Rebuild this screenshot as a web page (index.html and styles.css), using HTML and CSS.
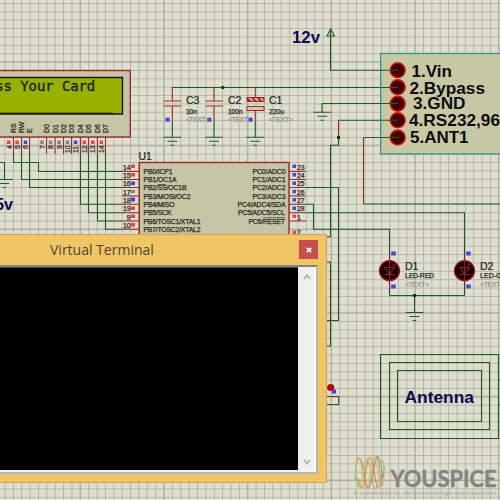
FILE: index.html
```
<!DOCTYPE html>
<html lang="en">
<head>
<meta charset="utf-8">
<title>Virtual Terminal</title>
<link rel="stylesheet" href="styles.css">
</head>
<body>
<main class="sheet">
<svg class="schematic" viewBox="0 0 500 500" width="500" height="500">
  <defs>
    <pattern id="minor" x="4.5" y="3" width="8.37" height="8.37" patternUnits="userSpaceOnUse">
      <path class="grid" d="M.5 0V8.37M0 .5H8.37"/>
    </pattern>
    <pattern id="major" x="79.2" y="60.8" width="83.7" height="83.7" patternUnits="userSpaceOnUse">
      <path class="grid-major" d="M1 0V83.7M0 1H83.7"/>
    </pattern>
    <pattern id="hatch" width="4" height="4" patternUnits="userSpaceOnUse" patternTransform="rotate(-45)">
      <rect width="2.3" height="4" fill="#a32222"/>
    </pattern>
    <g id="ground"><path class="wire" d="M-9 0H9M-5 4H5M-1.7 8H1.7"/></g>
    <g id="cap">
      <path class="pin" d="M0 87.5V101M-8.500 101H9M-8.500 106H9M0 106V121"/>
      <path class="wire" d="M0 121V137"/>
      <use href="#ground" y="137.300"/>
      <rect class="blue" x="-6.700" y="117.700" width="4" height="4"/>
    </g>
    <g id="led">
      <path class="wire" d="M0 229V253M0 290V295.500"/>
      <circle cx="0" cy="270.700" r="10" fill="#120000" stroke="#a01010" stroke-width="1.300"/>
      <path class="diode" d="M0 253V290M-5 267.500H5L0 274ZM-5 274.500H5M3 266L7 263"/>
      <rect class="blue" x="1.700" y="251.500" width="4.500" height="4"/>
      <rect class="blue" x="1.700" y="284.500" width="4.500" height="4"/>
    </g>
  </defs>

  <rect width="500" height="500" fill="url(#minor)"/>
  <rect width="500" height="500" fill="url(#major)"/>

  <!-- LCD module -->
  <rect class="part" x="-5" y="70.500" width="135.300" height="66.500"/>
  <rect x="-5" y="77.500" width="127.500" height="36.500" fill="#98b000" stroke="#111" stroke-width="1.400"/>
  <path d="M0 113.200H113" stroke="#111"/>
  <text class="lcd" x="-4.700" y="91" textLength="100" xml:space="preserve">ss Your Card</text>
  <g class="tiny" transform="rotate(-90)">
    <text x="-133" y="16">RS</text><text x="-133" y="24">RW</text><text x="-133" y="32">E</text>
    <text x="-133" y="49">D0</text><text x="-133" y="57.500">D1</text><text x="-133" y="66">D2</text><text x="-133" y="74">D3</text>
    <text x="-133" y="83">D4</text><text x="-133" y="91">D5</text><text x="-133" y="100">D6</text><text x="-133" y="108">D7</text>
    <text x="-149" y="12">4</text><text x="-149" y="20">5</text><text x="-149" y="28">6</text>
    <text x="-149" y="45">7</text><text x="-149" y="53">8</text><text x="-149" y="61.500">9</text><text x="-153" y="70">10</text>
    <text x="-153" y="78">11</text><text x="-153" y="86.500">12</text><text x="-153" y="95">13</text><text x="-153" y="103.500">14</text>
  </g>
  <path class="red" d="M7 140.500h3.500v3.500H7ZM15.300 140.500h3.500v3.500h-3.500ZM82.500 140.500h3.500v3.500h-3.500ZM91 140.500h3.500v3.500H91ZM99.500 140.500h3.500v3.500h-3.500Z"/>
  <path class="blue" d="M23.700 140.500h3.500v3.500h-3.500ZM73.800 140.500h3.500v3.500h-3.500Z"/>
  <path class="gray" d="M40.300 140.500h3.500v3.500h-3.500ZM48.800 140.500h3.500v3.500h-3.500ZM57.300 140.500h3.500v3.500h-3.500ZM65.700 140.500h3.500v3.500h-3.500Z"/>
  <path class="pin" d="M13.500 137V154M21.500 137V154M29.500 137V154M46.500 137V154M55 137V154M63.500 137V154M71.500 137V154M80.500 137V154M88.500 137V154M97.500 137V154M105.500 137V154"/>
  <path class="wire" d="M13.500 154V162.500H38.500V171.500H122M21.500 154V179.500H122M29.500 154V187.500H122M80.500 154V204.300H122M88.500 154V212.700H122M97.500 154V221H122M105.500 154V229.300H122"/>
  <path class="wire" d="M0 162.500H4.500V179.500M0 179.500H13M0 183.500H9M3 187.500H6"/>
  <text class="net" x="-5" y="210" textLength="18" lengthAdjust="spacingAndGlyphs">5v</text>

  <!-- Decoupling capacitors -->
  <path class="wire" d="M172 87.500H397"/>
  <circle cx="222.700" cy="87.500" r="1.700" fill="#0b3a12"/>
  <use href="#cap" x="172.300"/>
  <use href="#cap" x="214"/>
  <path class="pin" d="M255.300 87.500V97M255.300 111V121"/>
  <path class="wire" d="M255.300 121V137"/>
  <use href="#ground" x="255.300" y="137.300"/>
  <rect x="247" y="97.500" width="17" height="4" fill="#ead8bd"/>
  <rect x="247" y="97.500" width="17" height="4" fill="url(#hatch)" stroke="#9c2626"/>
  <rect x="247" y="106.500" width="17" height="4" fill="#dcc7a8" stroke="#9c2626"/>
  <rect class="blue" x="248.500" y="117.700" width="4" height="4"/>
  <g class="ref"><text x="186" y="104">C3</text><text x="228" y="104">C2</text><text x="269" y="104">C1</text><text x="138.500" y="160">U1</text><text x="405" y="269.500">D1</text><text x="480" y="269.500">D2</text></g>
  <g class="tiny"><text x="186" y="114" textLength="11">10n</text><text x="228" y="114" textLength="14.500">100n</text><text x="269" y="114" textLength="15">220u</text><text x="405" y="278" textLength="29">LED-RED</text><text x="480" y="278" textLength="41">LED-GREEN</text></g>
  <g class="tiny faint"><text x="186" y="121.700" textLength="23">&lt;TEXT&gt;</text><text x="228" y="121.700" textLength="20">&lt;TEXT</text><text x="269" y="121.700" textLength="24">&lt;TEXT&gt;</text><text x="405" y="287" textLength="24">&lt;TEXT&gt;</text><text x="480" y="287" textLength="24">&lt;TEXT&gt;</text></g>

  <!-- Microcontroller -->
  <rect class="part" x="139.300" y="162.500" width="149.700" height="90"/>
  <path class="pin" d="M122 171.500H139M122 179.500H139M122 187.500H139M122 196H139M122 204.300H139M122 212.700H139M122 221H139M122 229.300H139M289 171.500H306M289 179.500H306M289 187.500H306M289 196H306M289 204.300H306M289 212.700H306M289 221H306"/>
  <g class="tiny">
    <text x="143.500" y="173.500" textLength="29">PB0/ICP1</text><text x="143.500" y="182" textLength="33">PB1/OC1A</text>
    <text x="143.500" y="190" textLength="43">PB2/SS/OC1B</text><text x="143.500" y="198.500" textLength="47">PB3/MOSI/OC2</text>
    <text x="143.500" y="206.700" textLength="31">PB4/MISO</text><text x="143.500" y="215.300" textLength="28">PB5/SCK</text>
    <text x="143.500" y="223.500" textLength="57">PB6/TOSC1/XTAL1</text><text x="143.500" y="231.500" textLength="57">PB7/TOSC2/XTAL2</text>
    <text x="252.500" y="173.500" textLength="33">PC0/ADC0</text><text x="252.500" y="182" textLength="33">PC1/ADC1</text>
    <text x="252.500" y="190" textLength="33">PC2/ADC2</text><text x="252.500" y="198.500" textLength="33">PC3/ADC3</text>
    <text x="237.500" y="206.700" textLength="48">PC4/ADC4/SDA</text><text x="238" y="215.300" textLength="47">PC5/ADC5/SCL</text>
    <text x="248.500" y="223.500" textLength="36.500">PC6/RESET</text>
    <text x="123" y="169.500">14</text><text x="123" y="177.500">15</text><text x="123" y="186">16</text><text x="123" y="194.500">17</text>
    <text x="123" y="202.500">18</text><text x="123" y="211">19</text><text x="126.500" y="219.500">9</text><text x="123" y="227.500">10</text>
    <text x="297" y="169.500">23</text><text x="297" y="177.500">24</text><text x="297" y="186">25</text><text x="297" y="194.500">26</text>
    <text x="297" y="202.500">27</text><text x="297" y="211">28</text><text x="297" y="219.500">1</text><text x="297" y="235">2</text>
  </g>
  <path d="M157.500 184.500H166M263 217.700H285" stroke="#333" stroke-width=".7"/>
  <path class="red" d="M131 164.500h4v3.500h-4ZM131 173h4v3.500h-4ZM131 206.500h4v3.500h-4ZM131 214.500h4v3.500h-4ZM131 223h4v3.500h-4ZM292.500 214.500h3.500v3.500h-3.500ZM292.500 230.500h3.500v3.500h-3.500Z"/>
  <path class="blue" d="M131 181.500h4v3.500h-4ZM131 197.500h4v4h-4ZM292.500 164.500h3.500v3.500h-3.500ZM292.500 173h3.500v3.500h-3.500ZM292.500 181.500h3.500v3.500h-3.500ZM292.500 189.700h3.500v3.500h-3.500ZM292.500 198h3.500v3.500h-3.500ZM292.500 206.500h3.500v3.500h-3.500Z"/>
  <path class="gray" d="M131 190h4v3h-4Z"/>

  <!-- Wires leaving the microcontroller -->
  <path class="wire" d="M306 187.500H338.500V320.500H326M306 204.300H313.500V229.300H389.500M306 212.700H464.500V230M326 262H330.500V346H326"/>
  <path class="wire" d="M338.500 137V145.300H330.500V236.700H326M397 120.300H338.500"/>
  <path class="pin" d="M338.500 120.300V137M363.500 137.500V204M326 396.500H333"/>
  <path class="wire" d="M397 137.500H363.500M363.500 204H500M333 396.500H338.700V404.500H326"/>
  <rect x="337" y="136" width="3" height="3" fill="#0b3a12"/>
  <circle cx="330.700" cy="387.500" r="3.600" fill="#b00808"/>
  <rect class="blue" x="332" y="389.500" width="4" height="4"/>

  <!-- Connector -->
  <rect x="380.700" y="53.500" width="130" height="100.500" fill="#c8c8a5" stroke="#2f9490" stroke-width="1.300"/>
  <g fill="#430000" stroke="#e01010" stroke-width="1.400">
    <circle cx="397.700" cy="70.300" r="7.500"/><circle cx="397.700" cy="87.300" r="7.500"/><circle cx="397.700" cy="103.700" r="7.500"/><circle cx="397.700" cy="120.300" r="7.500"/><circle cx="397.700" cy="137.500" r="7.500"/>
  </g>
  <path class="wire" d="M330.500 28V70.300H398M327 36H334.500L330.700 29ZM381 87.500H398M398 103.500H322V112.300M381 120.300H398M381 137.500H398"/>
  <use href="#ground" x="322.300" y="112.300"/>
  <g class="terminal">
    <text x="411.500" y="76.500" textLength="40.500" lengthAdjust="spacingAndGlyphs">1.Vin</text><text x="409.500" y="93.500" textLength="75.500" lengthAdjust="spacingAndGlyphs">2.Bypass</text>
    <text x="413" y="109.300" textLength="52.500" lengthAdjust="spacingAndGlyphs">3.GND</text><text x="409" y="126.300" textLength="91" lengthAdjust="spacingAndGlyphs">4.RS232,96</text><text x="410" y="143.300" textLength="58.500" lengthAdjust="spacingAndGlyphs">5.ANT1</text>
  </g>
  <text class="net" x="292" y="43" textLength="28" lengthAdjust="spacingAndGlyphs">12v</text>

  <!-- Indicator LEDs -->
  <use href="#led" x="389.500"/><use href="#led" x="464.500"/>
  <path class="wire" d="M389.500 295.500H464.500M414.500 295.500V312.500"/>
  <rect x="413" y="294" width="3" height="3" fill="#0b3a12"/>
  <use href="#ground" x="414.500" y="312.500"/>

  <!-- Antenna -->
  <path class="wire" d="M380.500 354.500H498.500V438.500H380.500ZM389.500 362.500H489.500V429.500H389.500ZM397.500 370.500H481.500V421.500H397.500ZM498.500 379.500H500M498.500 404.500H500"/>
  <text class="net" x="404.500" y="403" textLength="69.500" lengthAdjust="spacingAndGlyphs">Antenna</text>

  <!-- Watermark -->
  <g fill="none" stroke-width="1.100" opacity=".8">
    <path stroke="#5cabd0" d="M355 480C356 455 361 451 364 473S368 494 372 473S377 450 380 473S383 485 384 466"/>
    <path stroke="#e8693c" d="M356 464C358 452 362 458 364 474S369 495 373 474S378 451 381 467S383 478 384 480M358 478C361 496 364 487 366 471S371 451 374 471S379 495 382 474"/>
    <path stroke="#8fbf4d" d="M355 469C357 490 360 493 363 474S368 453 371 473S376 497 379 473S383 465 385 470"/>
    <path stroke="#e2b548" d="M355 474C357 455 360 452 362 472S367 494 370 473S375 453 378 473S382 488 385 473"/>
  </g>
  <text class="brand" x="390.500" y="487" textLength="106" lengthAdjust="spacingAndGlyphs">YOUSPICE</text>
  <text class="tagline" x="353.500" y="495" textLength="143" lengthAdjust="spacingAndGlyphs">A community for electronic design and simulation</text>
</svg>

<section class="window">
  <header class="titlebar"><h1 class="title">Virtual Terminal</h1><button class="close" aria-label="Close"><svg width="6" height="6" viewBox="0 0 6 6"><path d="M.8.8L5.200 5.200M5.200.8L.8 5.200" stroke="#fff" stroke-width="1.700"/></svg></button></header>
  <div class="content">
    <div class="console"></div>
    <div class="scrollbar">
      <svg width="8" height="6" viewBox="0 0 8 6"><path d="M1 5L4 1.500L7 5"/></svg>
      <svg width="8" height="6" viewBox="0 0 8 6"><path d="M1 1L4 4.500L7 1"/></svg>
    </div>
  </div>
</section>
</main>
</body>
</html>
```
FILE: styles.css
```
* { box-sizing: border-box; }
body { margin: 0; font-family: "Liberation Sans", Arial, sans-serif; }
.sheet { position: relative; width: 500px; height: 500px; overflow: hidden; background: #dedfcf; }
.schematic { display: block; }
.grid { stroke: #b5b6a8; stroke-width: 1; fill: none; }
.grid-major { stroke: #a5a698; stroke-width: 1.3; opacity: .65; fill: none; }
.wire { fill: none; stroke: #205a2a; stroke-width: 1.1; }
.pin { fill: none; stroke: #a02e2e; stroke-width: 1.1; }
.diode { fill: none; stroke: #981c1c; stroke-width: 1.1; }
.part { fill: #c6c6a6; stroke: #982c2c; stroke-width: 1.4; }
.red { fill: #f04444; }
.blue { fill: #4545e0; }
.gray { fill: #85857c; }
.tiny { font-size: 6.9px; fill: #282824; stroke: #282824; stroke-width: .25px; }
.faint { fill: #888880; stroke: #888880; stroke-width: .1px; }
.ref { font-size: 10.5px; fill: #222; stroke: #222; stroke-width: .2px; }
.lcd { font: 14px "DejaVu Sans Mono", monospace; fill: #161c04; stroke: #161c04; stroke-width: .3px; white-space: pre; }
.net { font-size: 17px; font-weight: bold; fill: #0d0950; }
.terminal { font-size: 16.5px; font-weight: bold; fill: #0c0c0c; }
.brand { font: bold 23.5px Lato, sans-serif; fill: #85857f; stroke: #85857f; stroke-width: .5px; }
.tagline { font-size: 6.2px; font-weight: bold; fill: #adada4; }
.window {
  position: absolute; left: -8px; top: 234px; width: 335px; height: 249px;
  display: flex; flex-direction: column; padding: 0 8px 8px;
  background: #efc566; border: 1px solid #cfa453;
}
.titlebar { display: flex; justify-content: space-between; height: 30px; padding-left: 49px; }
.title { margin: 0; font: 14px/29px "Open Sans", sans-serif; color: #504630; }
.close { display: flex; align-items: center; justify-content: center; width: 19px; height: 19px; margin-top: 5px; padding: 0; border: 0; background: #c74f4e; }
.content { flex: 1; display: flex; margin-left: -8px; border: 2px solid #b5b5b5; border-top-color: #858585; background: #f5f5f7; padding-bottom: 2px; }
.console { flex: 1; background: #000; border-top: 1px solid #444; }
.scrollbar { width: 18px; display: flex; flex-direction: column; justify-content: space-between; padding: 7px 0 5px 5px; background: #efeff0; border-right: 2px solid #fff; }
.scrollbar path { fill: none; stroke: #b0b0b0; stroke-width: 1.8; }
```
